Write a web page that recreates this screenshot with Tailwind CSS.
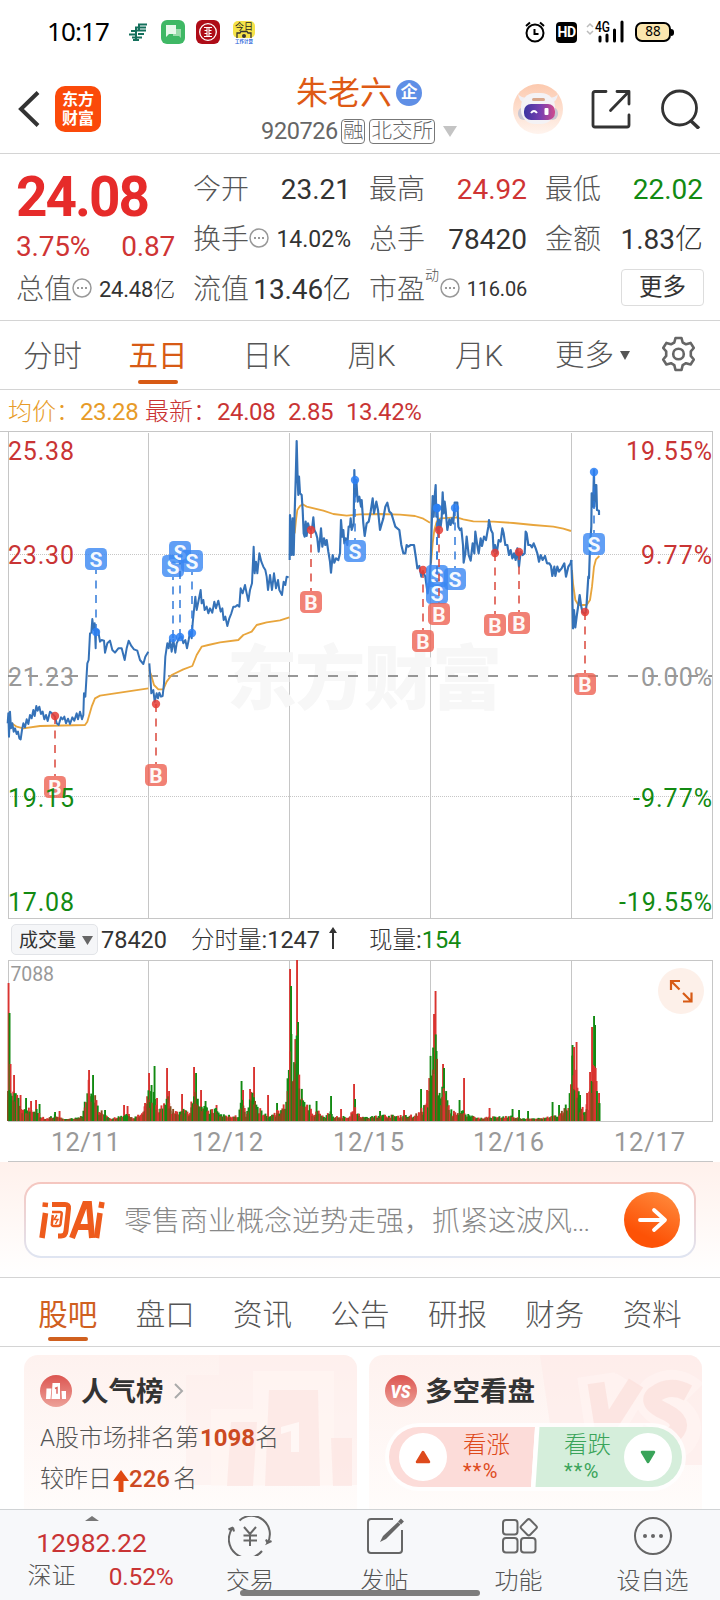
<!DOCTYPE html>
<html lang="zh-CN">
<head>
<meta charset="utf-8">
<title>朱老六 920726</title>
<script src="https://cdn.jsdelivr.net/npm/@tailwindcss/browser@4"></script>
</head>
<body class="bg-white">
<div class="w-[720px] h-[1600px] overflow-hidden flex flex-col bg-white text-[#333] whitespace-nowrap font-[Roboto,'Noto_Sans_CJK_SC',sans-serif]">

  <!-- status bar -->
  <div class="h-16 shrink-0 flex items-center justify-between pl-[47px] pr-[46px] text-black">
    <div class="flex items-center">
      <span class="text-[26px] leading-none w-[82px] -mt-[2px] font-['Noto_Sans',sans-serif] tracking-[-0.9px]">10:17</span>
      <svg class="w-[18px] h-[18px]" viewBox="0 0 18 18" fill="none" stroke="#14705c" stroke-width="2"><path d="M9 1.5h9M6 4.500h11M2 8h5M8 7.500h9M0 11.500h7M9 11h6M3 14.500h4M8 14.500h5M4 17h6M7 4v13M10 1v6"/></svg>
      <svg class="ml-[14px] w-6 h-6" viewBox="0 0 24 24"><rect width="24" height="24" rx="6" fill="#3fb865"/><path d="M12 9h8v9l-2-2h-6z" fill="#9adbab"/><path d="M5 5h10v9H8l-3 3z" fill="#e8f8eb"/></svg>
      <svg class="ml-[11px] w-6 h-6" viewBox="0 0 24 24"><rect width="24" height="24" rx="6" fill="#ae0c17"/><circle cx="12" cy="12" r="8.300" fill="none" stroke="#fff" stroke-width="1.300"/><path d="M8 7.500h8M8 16.500h8M11 8v8M13 8v8M8.500 10.500h2.500v3H8.500M15.500 10.500H13v3h2.500" fill="none" stroke="#fff" stroke-width="1.100"/></svg>
      <svg class="ml-[13px] w-[22px] h-6" viewBox="0 0 22 24"><rect y="1" width="22" height="17" rx="5" fill="#f5e249"/><text x="11" y="10" font-size="9" text-anchor="middle" fill="#222">今日</text><path d="M4 18v-5h3l1-1.500h6l1 1.500h3v5" fill="none" stroke="#333" stroke-width="1.300"/><circle cx="11" cy="16" r="2" fill="#333"/><text x="11" y="23" font-size="4.500" font-weight="700" text-anchor="middle" fill="#2b62d9">工作计算</text></svg>
    </div>
    <div class="flex items-center">
      <svg class="w-5 h-[22px]" viewBox="0 0 20 22" fill="none" stroke="#000" stroke-width="2"><circle cx="10" cy="12" r="8.500"/><path d="M9.500 8v5h4M1 5l4-3.500M19 5l-4-3.500"/></svg>
      <span class="ml-[11px] w-[21px] h-[21px] rounded-[4px] bg-black text-white text-[14px] font-bold leading-[21px] text-center tracking-[-0.5px]">HD</span>
      <svg class="ml-[9px] w-[40px] h-[24px]" viewBox="0 0 40 24"><path d="M1 7l3-3 3 3M1 11l3 3 3-3" fill="none" stroke="#bbb" stroke-width="1.500"/><text x="9" y="12" font-size="14" font-weight="500" textLength="15" lengthAdjust="spacingAndGlyphs">4G</text><path d="M14 17v4M21 15v6M28.500 10v11M36 2v19" stroke="#000" stroke-width="3" stroke-linecap="round"/></svg>
      <div class="ml-[9px] w-[36px] h-5 rounded-[7px] border-2 border-black bg-[#fbe6ae] text-[13.500px] leading-[15px] text-center font-['Noto_Sans',sans-serif]">88</div><div class="w-[3px] h-[7px] bg-black rounded-r"></div>
    </div>
  </div>

  <!-- title bar -->
  <header class="h-[90px] shrink-0 border-b border-[#d4d4d4] grid grid-cols-[1fr_auto_1fr] pt-[6px]">
    <div class="flex items-center pl-[18px] pb-[5px]">
      <svg class="w-[22px] h-[36px]" viewBox="0 0 22 36" fill="none" stroke="#333" stroke-width="4"><path d="M20 1.500L3 18l17 16.500"/></svg>
      <div class="ml-[15px] w-[46px] h-[46px] rounded-[10px] bg-[#fb4a0a] text-white text-[16px] font-bold leading-[19px] text-center pt-[4px]">东方<br>财富</div>
    </div>
    <div class="flex flex-col items-center pr-[2px]">
      <div class="flex items-center h-[46px] text-[#de5a14]"><span class="text-[32px] leading-none">朱老六</span>
        <span class="ml-1 w-[26px] h-[26px] rounded-full bg-[#5f8fe6] text-white text-[17px] font-bold text-center leading-[25px]">企</span></div>
      <div class="flex items-center h-[30px] text-[#666]">
        <span class="text-[23.500px] tracking-[-0.4px] leading-none mr-[3px] pt-px">920726</span>
        <span class="border-[1.500px] border-[#777] rounded-[4px] text-[20.500px] font-light leading-[23px] h-[25px] px-[1px] mr-1">融</span>
        <span class="border-[1.500px] border-[#777] rounded-[4px] text-[20.500px] font-light leading-[23px] h-[25px] px-[1px]">北交所</span>
        <svg class="ml-2 w-[14px] h-[11px]" viewBox="0 0 14 11"><path d="M0 0h14L7 11z" fill="#c4c4c4"/></svg>
      </div>
    </div>
    <div class="flex items-center justify-end pr-[19px] pb-[5px]">
      <svg class="w-[50px] h-[50px]" viewBox="0 0 50 50">
        <defs><linearGradient id="halo" x2="0" y2="1"><stop stop-color="#fcc9ae"/><stop offset="1" stop-color="#fff4ee"/></linearGradient>
        <linearGradient id="visor"><stop stop-color="#3b35a0"/><stop offset=".55" stop-color="#7a3fb0"/><stop offset="1" stop-color="#d04a8c"/></linearGradient></defs>
        <circle cx="25" cy="25" r="25" fill="url(#halo)"/>
        <path d="M5 10q1 7 6 9l4-5q-7 0-10-4zM45 10q-1 7-6 9l-4-5q7 0 10-4z" fill="#f1eff3"/>
        <rect x="5" y="23" width="40" height="13" rx="6" fill="#c9c6d2"/>
        <rect x="8" y="9" width="34" height="31" rx="14" fill="#f4f2f5"/>
        <rect x="19" y="14" width="13" height="3" rx="1.500" fill="#d9a68a"/>
        <rect x="11" y="20" width="31" height="16" rx="7" fill="url(#visor)"/>
        <path d="M18 29q3-4 6 0" fill="none" stroke="#fff" stroke-width="2"/><rect x="31.500" y="24" width="4" height="7" rx="1" fill="#fff"/>
      </svg>
      <svg class="ml-[28px] w-[40px] h-[40px]" viewBox="0 0 40 40" fill="none" stroke="#333" stroke-width="2.800" stroke-linecap="round" stroke-linejoin="round"><path d="M15 2.500H4q-2 0-2 2V36q0 2 2 2h32q2 0 2-2V26M26 2.500h12V15M37 3.500L19.500 21.500"/></svg>
      <svg class="ml-[30px] w-[40px] h-[40px]" viewBox="0 0 40 40" fill="none" stroke="#333" stroke-width="2.800"><circle cx="18.500" cy="19" r="17"/><path d="M29.500 31.500l8.500 8" stroke-width="3.500"/></svg>
    </div>
  </header>

  <!-- quote -->
  <section class="h-[167px] shrink-0 border-b border-[#d4d4d4] pl-4 pr-[17px] pt-[10px] flex gap-[18px] text-[28px] leading-[51px]">
    <div class="w-[159px]">
      <div class="h-[60px] text-[56px] leading-[66px] font-bold text-[#e62b2a] tracking-[-2px] origin-left scale-x-[.98]">24.08</div>
      <div class="h-10 flex justify-between text-[28px] leading-[46px] tracking-[-0.2px] text-[#cf3434]"><span>3.75%</span><span>0.87</span></div>
      <div class="h-[50px] flex items-center justify-between"><span class="flex items-center font-light text-[#555]">总值<svg class="w-5 h-5 -mt-[2px]" viewBox="0 0 20 20" fill="none" stroke="#999" stroke-width="1.500"><circle cx="10" cy="10" r="9"/><path d="M5 10h2M9 10h2M13 10h2" stroke-width="2"/></svg></span><span class="text-[22px] tracking-[-0.2px]">24.48<span class="font-light">亿</span></span></div>
    </div>
    <div class="w-[158px]">
      <div class="h-[50px] flex justify-between"><span class="font-light text-[#555]">今开</span><span>23.21</span></div>
      <div class="h-[50px] flex items-center justify-between"><span class="flex items-center font-light text-[#555]">换手<svg class="w-5 h-5 -mt-[2px]" viewBox="0 0 20 20" fill="none" stroke="#999" stroke-width="1.500"><circle cx="10" cy="10" r="9"/><path d="M5 10h2M9 10h2M13 10h2" stroke-width="2"/></svg></span><span class="text-[23px]">14.02%</span></div>
      <div class="h-[50px] flex justify-between"><span class="font-light text-[#555]">流值</span><span class="tracking-[-0.1px]">13.46<span class="font-light">亿</span></span></div>
    </div>
    <div class="w-[158px]">
      <div class="h-[50px] flex justify-between"><span class="font-light text-[#555]">最高</span><span class="text-[#cf3434]">24.92</span></div>
      <div class="h-[50px] flex justify-between"><span class="font-light text-[#555]">总手</span><span>78420</span></div>
      <div class="h-[50px] flex items-center justify-between"><span class="flex items-center font-light text-[#555]">市盈<span class="text-[14px] leading-none -mt-7 w-[14px]">动</span><svg class="w-5 h-5 ml-px -mt-[2px]" viewBox="0 0 20 20" fill="none" stroke="#999" stroke-width="1.500"><circle cx="10" cy="10" r="9"/><path d="M5 10h2M9 10h2M13 10h2" stroke-width="2"/></svg></span><span class="text-[20px] tracking-[-0.2px]">116.06</span></div>
    </div>
    <div class="w-[158px]">
      <div class="h-[50px] flex justify-between"><span class="font-light text-[#555]">最低</span><span class="text-[#128a12]">22.02</span></div>
      <div class="h-[50px] flex justify-between"><span class="font-light text-[#555]">金额</span><span>1.83<span class="font-light">亿</span></span></div>
      <div class="h-[50px] flex items-center justify-end -mt-[2px]"><span class="w-[83px] h-[37px] -mr-px rounded-[4px] border-[1.500px] border-[#ddd] text-[23.500px] leading-[34px] text-center">更多</span></div>
    </div>
  </section>

  <!-- period tabs -->
  <nav class="h-[69px] shrink-0 border-b border-[#d4d4d4] flex text-[29.500px] font-light leading-[71px] text-[#555] text-center pl-2">
    <span class="w-[89px]">分时</span>
    <span class="w-[122px] flex flex-col items-center text-[#d75a15] font-normal"><span class="h-[59px]">五日</span><span class="w-10 h-1 rounded bg-[#d75a15]"></span></span>
    <span class="w-[95px]">日K</span>
    <span class="w-[115px]">周K</span>
    <span class="w-[100px]">月K</span>
    <span class="w-[101px] flex items-center justify-end"><span>更多</span><svg class="w-[10px] h-[9px] ml-[6px]" viewBox="0 0 10 9"><path d="M0 0h10L5 9z" fill="#555"/></svg></span>
    <span class="w-[80px] pl-[17px] flex items-center justify-center">
      <svg class="w-[35px] h-[36px] -mt-[2px]" viewBox="0 0 35 36" fill="none" stroke="#666" stroke-width="2.600" stroke-linejoin="round"><path d="M14.500 2h6l1.200 4.500 3.300 1.800 4.600-1.400 3.200 5.100-3 3.400v4.500l3 3.600-3.200 5-4.600-1.300-3.300 1.900L20.500 34h-6l-1.200-4.900-3.300-1.900-4.600 1.300-3.200-5 3-3.600v-4.500l-3-3.400 3.200-5.100L10 8.300l3.300-1.800z"/><circle cx="17.500" cy="18" r="5.300"/></svg>
    </span>
  </nav>

  <div class="h-[40px] shrink-0 flex text-[24px] leading-[44px] pl-2 text-[#c93434] tracking-[-0.4px]">
    <span class="w-[72px] text-[#e79b28] tracking-normal font-light">均价：</span><span class="w-[65px] text-[#e79b28]">23.28</span><span class="w-[72px] tracking-normal font-light">最新：</span><span class="w-[71px]">24.08</span><span class="w-[58px]">2.85</span><span>13.42%</span>
  </div>

  <!-- price chart -->
  <svg class="w-[720px] h-[489px] shrink-0" viewBox="0 430 720 489" id="price">
    <g stroke="#c6c6c6" stroke-width="1" fill="none">
      <path d="M0 431.500H713M8 918.500H713M8.500 431V918M148.500 433V918M289.500 433V918M430.500 433V918M571.500 433V918M712.500 431V918"/>
      <path d="M8 554.500H712M8 796.500H712" stroke-dasharray="1 1"/>
    </g>
    <text x="227" y="704" font-size="70" font-weight="900" textLength="275" fill="#f7f7f7">东方财富</text>
    <path d="M8 676H712" stroke="#777" stroke-width="1.700" stroke-dasharray="10 10"/>
    <g fill="none" stroke-linejoin="round">
      <g transform="translate(0 430) scale(.33333)">
        <g stroke="#e8a53c" stroke-width="5.500">
          <path d="M35 880L50 890 70 895 120 888 255 885 262 875 275 830 285 805 300 797 345 790 445 775"/>
          <path d="M448 720L455 740 462 765 475 778 490 778 500 755 515 735 550 718 577 708 590 675 605 650 625 645 660 637 715 630 730 615 755 605 770 585 800 577 840 571 868 562"/>
        </g>
        <g stroke="#3572b8" stroke-width="6">
          <path d="M23 880L25 850 27 920 30 845 33 895 37 880 41 905 45 895 50 912 54 905 58 925 62 928 66 900 70 880 75 892 80 868 85 882 90 855 95 865 100 840 104 858 109 828 113 842 118 830 123 852 128 845 133 868 138 855 143 873 150 845 156 850 165 860 170 880 176 885 183 862 188 868 193 860 198 880 204 866 210 882 217 862 223 872 230 850 234 868 240 845 246 868 250 855 252 790 256 800 262 700 266 690 270 610 274 608 277 567 281 600 284 580 287 655 288 600 294 600 300 635 305 630 312 632 315 668 322 640 330 632 337 660 345 668 355 655 365 655 374 690 380 655 386 632 394 648 402 658 412 662 420 690 430 702 436 680 445 665"/>
          <path d="M448 700L451 740 454 790 460 780 464 815 470 790 474 805 478 788 483 800 488 798 492 760 496 680 502 640 506 655 510 630 515 665 520 630 526 668 530 640 537 625 545 620 550 640 556 630 561 655 566 630 570 605 575 625 578 580 582 540 586 500 590 540 596 510 602 480 605 520 610 510 614 540 620 530 625 550 630 535 637 548 643 515 648 535 655 512 662 545 667 535 671 570 676 560 682 588 688 565 694 550 700 530 706 530 712 525 718 530 722 475 728 490 735 465 740 490 745 513 750 480 756 460 761 350 764 430 768 395 772 430 778 370 784 395 790 410 796 420 800 440 804 480 810 435 816 480 822 430 828 475 834 450 838 480 846 495 851 455 856 465 860 440 866 442"/>
        </g>
      </g>
      <g transform="translate(280 430) scale(.33333)">
        <g stroke="#e8a53c" stroke-width="5.500">
          <path d="M44 310L48 270 52 240 60 228 68 223 80 230 130 242 160 252 200 257 240 253 300 252 360 254 405 258 430 266 450 278"/>
          <path d="M453 400L458 340 463 300 470 275 480 265 530 262 550 268 580 274 640 275 700 279 760 285 820 290 850 296 873 303"/>
          <path d="M876 420L879 460 886 510 895 525 920 525 930 510 936 470 942 410 948 388 958 378"/>
        </g>
        <g stroke="#3572b8" stroke-width="6.500">
          <path d="M29 390L30 255 33 300 35 375 38 265 41 375 44 250 47 150 50 33 53 150 55 195 57 140 60 190 65 195 68 240 71 310 74 320 77 275 80 318 84 280 88 295 93 300 97 290 100 262 103 300 108 310 112 325 116 365 120 330 123 295 127 350 132 325 136 345 140 330 145 365 150 395 153 428 158 375 163 398 168 385 175 390 180 370 183 270 187 320 190 300 193 340 197 325 202 345 206 290 210 290 212 265 215 300 218 290 221 280 223 120 225 200 229 150 233 215 238 200 243 230 245 210 250 280 254 318 260 280 266 275 272 245 278 205 282 250 289 215 294 240 300 300 305 282 310 265 316 230 322 218 328 245 334 250 340 270 346 290 352 295 358 300 364 345 370 370 376 370 380 345 385 350 392 345 402 345 408 385 412 415 418 408 424 440 429 425 436 440 440 470 443 490 448 460 452 400 455 290 458 198 461 260 464 200 467 165 469 260 472 225 475 320 478 270 482 290 485 265 488 187 491 250 494 215 497 240 502 300 508 268 512 285 516 265 520 280 524 218 532 218 535 290 540 300 544 295 549 345 551 398 556 370 560 320 566 375 572 392 578 340 583 370 586 305 591 340 596 370 602 325 606 348 612 320 618 330 625 290 627 270 633 300 638 310 641 365 645 345 650 370 656 330 662 335 667 295 671 310 676 345 682 345 687 375 692 360 697 385 702 370 707 390 712 355 717 410 722 365 728 375 734 370 737 305 740 310 745 345 751 345 756 352 761 340 767 355 772 370 777 395 782 375 788 390 795 378 801 400 808 400 813 408 817 438 823 410 826 438 832 410 837 425 845 415 853 400 858 440 865 410 872 400 874 390"/>
          <path d="M874 390L876 450 879 595 882 540 886 592 890 560 895 525 899 495 903 525 907 545 912 550 917 548 920 520 925 440 927 445 930 350 934 290 935 190 939 230 942 120 943 230 946 165 949 165 951 240 957 242 957 255"/>
        </g>
      </g>
    </g>
    <g id="marks"></g>
    <g font-size="25" fill="#c93434">
      <text x="8" y="460" textLength="66">25.38</text><text x="8" y="564" textLength="66">23.30</text>
      <text x="8" y="686" textLength="66" fill="#999">21.23</text>
      <text x="8" y="807" textLength="66" fill="#128a12">19.15</text><text x="8" y="911" textLength="66" fill="#128a12">17.08</text>
      <text x="626" y="460" textLength="86">19.55%</text><text x="641" y="564" textLength="71">9.77%</text>
      <text x="641" y="686" textLength="71" fill="#999">0.00%</text>
      <text x="633" y="807" textLength="79" fill="#128a12">-9.77%</text><text x="619" y="911" textLength="93" fill="#128a12">-19.55%</text>
    </g>
  </svg>

  <!-- volume -->
  <div class="h-[41px] shrink-0 flex items-center pl-[11px] text-[23.500px] leading-[41px]">
    <span class="w-[87px] h-[31px] rounded-[5px] border border-[#e2e4e8] bg-[#f5f6f8] flex items-center pl-[7px] pt-px text-[19px]">成交量<svg class="ml-[6px] w-[11px] h-[9px]" viewBox="0 0 11 9"><path d="M0 0h11L5.500 9z" fill="#666"/></svg></span>
    <span class="w-[90px] pl-[3px] pt-[2px]">78420</span>
    <span class="w-[135px] pl-[3px] pt-[2px]"><span class="font-light">分时量</span>:1247</span>
    <svg class="w-[8px] h-[22px] ml-[6px] -mt-1" viewBox="0 0 8 22"><path d="M4 4v18" stroke="#333" stroke-width="2"/><path d="M0 6l4-6 4 6z" fill="#333"/></svg>
    <span class="ml-[32px] pt-[2px]"><span class="font-light">现量</span>:<span class="text-[#128a12]">154</span></span>
  </div>
  <svg class="w-[720px] h-[202px] shrink-0" viewBox="0 960 720 202">
    <path d="M8 960.500H713M8 1121.500H713M8.500 960V1121M148.500 960V1121M289.500 960V1121M430.500 960V1121M571.500 960V1121M712.500 960V1121M8 1161.500H713" stroke="#c6c6c6" fill="none"/>
    <text x="10.500" y="981" font-size="19.500" textLength="43.500" fill="#999">7088</text>
    <g id="vol"></g>
    <circle cx="681" cy="991" r="23" fill="#fdf0e9"/>
    <path d="M680 981h-9v9M671.500 981.500l8 8M683 1001.500h8.500v-9M691 1001l-8-8" fill="none" stroke="#d75a15" stroke-width="2.200"/>
    <g font-size="25.500" fill="#999">
      <text x="51" y="1151" textLength="69">12/11</text><text x="192" y="1151" textLength="71">12/12</text><text x="333" y="1151" textLength="71">12/15</text><text x="473" y="1151" textLength="71">12/16</text><text x="614" y="1151" textLength="71">12/17</text>
    </g>
  </svg>

  <!-- AI prompt -->
  <section class="h-[116px] shrink-0 border-b border-[#d4d4d4] bg-gradient-to-b from-[#fff1ec] to-white px-6 pt-5">
    <div class="h-[76px] rounded-[17px] p-[2px] bg-gradient-to-b from-[#f5c6bf] to-[#dfe5f2]">
      <div class="h-full rounded-[15px] bg-white flex items-center pl-[13px] pr-[14px]">
        <svg class="w-[66px] h-[40px]" viewBox="0 0 66 40" fill="none" stroke="#ee5b1c"><path d="M6.500 13L3 38M6.500 2.500L6 7" stroke-width="5.500"/><path d="M13 4.500h13q4 0 3.500 4L27 31q-.5 5-5 5h-3" stroke-width="5"/><path d="M13 12h8q2 0 1.700 2l-1.200 10q-.3 2-2.300 2h-4.500q-2.200 0-1.900-2l1-9" stroke-width="2.500"/><path d="M18 15l-3 4.500h4l-2.500 4.500" stroke-width="1.500"/><path d="M33 38L46 4h4l3 34M38 27h13" stroke-width="6"/><path d="M61 13l-3.500 25M63 2l-1 6" stroke-width="5.500"/></svg>
        <span class="ml-[19px] flex-1 text-[28px] font-light leading-none text-[#888] pt-[3px]">零售商业概念逆势走强，抓紧这波风<span class="tracking-[-1px]">...</span></span>
        <svg class="w-14 h-14" viewBox="0 0 56 56"><defs><linearGradient id="go" x1=".8" x2=".4" y2=".8"><stop stop-color="#ff8a3c"/><stop offset="1" stop-color="#fd5206"/></linearGradient></defs><circle cx="28" cy="28" r="28" fill="url(#go)"/><path d="M16 28h24M30 18l11 10-11 10" fill="none" stroke="#fff" stroke-width="3.800" stroke-linecap="round" stroke-linejoin="round"/></svg>
      </div>
    </div>
  </section>

  <nav class="h-[69px] shrink-0 border-b border-[#d4d4d4] grid grid-cols-7 px-[19px] text-[29.500px] font-light leading-[74px] text-[#555] text-center">
    <span class="flex flex-col items-center text-[#d0601f] font-normal"><span class="h-[59px]">股吧</span><span class="w-10 h-1 rounded bg-[#d0601f]"></span></span>
    <span>盘口</span><span>资讯</span><span>公告</span><span>研报</span><span>财务</span><span>资料</span>
  </nav>

  <!-- cards -->
  <section class="h-[162px] shrink-0 overflow-hidden px-6 pt-2 grid grid-cols-[333px_333px] gap-3 text-[#555]">
    <div class="relative h-[170px] rounded-[14px] overflow-hidden bg-gradient-to-b from-[#fef2ef] to-[#fffdfc] pl-4 pt-5">
      <svg class="absolute right-0 top-0 w-[180px] h-[150px]" viewBox="0 0 180 150"><path d="M42 0h138v130H9V20h33z" fill="#fdeeeb" opacity=".5"/><path d="M76 16h81v115H34V54h42z" fill="#fff6f4" opacity=".6"/><path d="M54 67h26l-4 64H50zM92 35h49l2 96H88zM154 83h21v48h-19z" fill="#fce3df" opacity=".6"/><path d="M104 72l18-5v30h-8V76l-10 3z" fill="#fff7f5"/></svg>
      <div class="relative flex items-center h-8">
        <svg class="w-8 h-8" viewBox="0 0 32 32"><defs><linearGradient id="rd" x2="0" y2="1"><stop stop-color="#dc5550"/><stop offset="1" stop-color="#eda199"/></linearGradient></defs><circle cx="16" cy="16" r="16" fill="url(#rd)"/><path d="M6.500 13.500h5L10.500 24H6zM12.500 8h7.500v16h-8.500zM21.500 16H26v8h-4z" fill="#fff"/><path d="M15 13.500l2-.8v6" stroke="#dc6660" stroke-width="1.500" fill="none"/></svg>
        <span class="ml-[9px] text-[27.500px] font-bold leading-none text-[#333] pt-px">人气榜</span>
        <svg class="ml-[10px] w-[10px] h-4" viewBox="0 0 10 16" fill="none" stroke="#aaa" stroke-width="2"><path d="M1 1l7 7-7 7"/></svg>
      </div>
      <div class="relative mt-[11px] h-10 flex items-center text-[24px] font-light">A股市场排名第<b class="font-bold text-[#cc4a22] pl-px">1098</b>名</div>
      <div class="relative mt-px h-10 flex items-center text-[24px] font-light">较昨日<svg class="w-4 h-[22px] mx-px mt-1" viewBox="0 0 16 22"><path d="M8 0l8 11h-5.500v11h-5V11H0z" fill="#e04a12"/></svg><b class="font-medium text-[#cc4a22] -ml-px">226</b><span class="pl-[3px]">名</span></div>
    </div>
    <div class="relative h-[170px] rounded-[14px] overflow-hidden bg-gradient-to-b from-[#fef2ef] to-[#fffdfc] pl-4 pt-5">
      <svg class="absolute right-0 top-0 w-[180px] h-[150px]" viewBox="0 0 180 150"><path d="M18 0h162v110H34z" fill="#fdeae7" opacity=".55"/><g fill="none" stroke-linejoin="bevel"><path d="M74 20l8 54 28-46M168 42q-14-14-32-4-10 8 8 17 24 12 12 28-16 14-40 2" stroke="#fff5f3" stroke-width="38" opacity=".6"/><path d="M74 28l8 50 32-50M166 38q-18-10-34 2-8 8 12 17 20 10 8 22-14 8-34-2" stroke="#fbe0dc" stroke-width="17" opacity=".75"/></g></svg>
      <div class="relative flex items-center h-8">
        <svg class="w-8 h-8" viewBox="0 0 32 32"><circle cx="16" cy="16" r="16" fill="url(#rd)"/><text x="15.500" y="22.500" font-size="18" font-weight="900" font-style="italic" text-anchor="middle" textLength="20" lengthAdjust="spacingAndGlyphs" fill="#fff">VS</text></svg>
        <span class="ml-2 text-[27.500px] font-bold leading-none text-[#333] pt-[2px]">多空看盘</span>
      </div>
      <div class="relative mt-[16px] w-[301px] h-[68px] rounded-full bg-white/80 p-1">
        <div class="relative h-[60px] rounded-full overflow-hidden flex">
          <svg class="absolute inset-0 w-full h-full" viewBox="0 0 293 60"><path d="M0 0h146l-4 60H0z" fill="#fcdcd9"/><path d="M146 0h5l-4 60h-5z" fill="#fff"/><path d="M150.500 0H293v60H146.500z" fill="#d5eedb"/></svg>
          <div class="relative w-1/2 flex items-center pl-[10px] text-[#de4a1c]">
            <span class="w-12 h-12 rounded-full bg-white flex items-center justify-center"><svg class="w-[16px] h-[14px]" viewBox="0 0 16 14"><path d="M8 2l6 10H2z" fill="#de4a1c" stroke="#de4a1c" stroke-width="2.500" stroke-linejoin="round"/></svg></span>
            <span class="pl-4"><span class="block text-[23.500px] font-light leading-[28px]">看涨</span><span class="block text-[20px] leading-[24px] tracking-[1.200px]">**%</span></span>
          </div>
          <div class="relative w-1/2 flex items-center justify-end pr-[10px] text-[#3aa45a]">
            <span class="pr-[13px]"><span class="block text-[23.500px] font-light leading-[28px]">看跌</span><span class="block text-[20px] leading-[24px] tracking-[1.200px]">**%</span></span>
            <span class="w-12 h-12 rounded-full bg-white flex items-center justify-center"><svg class="w-[16px] h-[14px]" viewBox="0 0 16 14"><path d="M8 12l6-10H2z" fill="#3aa45a" stroke="#3aa45a" stroke-width="2.500" stroke-linejoin="round"/></svg></span>
          </div>
        </div>
      </div>
    </div>
  </section>

  <!-- bottom bar -->
  <footer class="relative h-[91px] shrink-0 border-t border-[#d0d3d5] bg-[#f7f8fa] flex text-[24px] font-light leading-[30px] text-[#555]">
    <div class="w-[183px] flex flex-col items-center text-[#c93434] font-normal">
      <svg class="w-[14px] h-[5px] mt-[6px]" viewBox="0 0 14 5"><path d="M0 5l7-5 7 5z" fill="#777"/></svg>
      <span class="text-[26.500px] leading-[43px] -mb-px tracking-[-0.1px]">12982.22</span>
      <span class="w-[146px] ml-[18px] flex justify-between leading-[27px]"><span class="font-light text-[#555]">深证</span><span class="text-[24.500px] tracking-[-0.2px]">0.52%</span></span>
    </div>
    <div class="w-[134px] flex flex-col items-center pt-[7px]">
      <svg class="w-[44px] h-[40px] -mt-px" viewBox="0 -1 44 40" fill="none" stroke="#666" stroke-width="2"><path d="M11.500 3.500A18.200 18.200 0 0 1 39.500 26l4-2M39.500 26l-1.500-3.500M34 34A18.200 18.200 0 0 1 5 10.500L.5 12.500M5 10.500l1 4M16 10l6 7 6-7M15.500 18.500h13.500M15.500 23.500h13.500M22 17v12"/></svg>
      <span class="mt-[10px]">交易</span></div>
    <div class="w-[135px] flex flex-col items-center pt-[7px]">
      <svg class="w-[38px] h-[38px]" viewBox="0 0 38 38" fill="none" stroke="#666" stroke-width="2"><path d="M27 2H5Q2 2 2 5v28q0 3 3 3h28q3 0 3-3V13"/><path d="M14 25l3-6L32 5l2.500 2.500L20 22z" fill="#666" stroke="none"/><path d="M33.500 3l3 3" stroke-width="4"/></svg>
      <span class="mt-[11px]">发帖</span></div>
    <div class="w-[133px] flex flex-col items-center pt-[7px]">
      <svg class="w-[38px] h-[38px]" viewBox="0 0 38 38" fill="none" stroke="#666" stroke-width="2"><rect x="3" y="3" width="14.500" height="14.500" rx="3"/><rect x="3" y="21" width="14.500" height="14.500" rx="3"/><rect x="21" y="21" width="14.500" height="14.500" rx="3"/><rect x="22.500" y="4" width="12.500" height="12.500" rx="2" transform="rotate(45 28.750 10.250)"/></svg>
      <span class="mt-[11px]">功能</span></div>
    <div class="w-[135px] flex flex-col items-center pt-[7px]">
      <svg class="w-[38px] h-[38px]" viewBox="0 0 38 38" fill="none" stroke="#666" stroke-width="2"><circle cx="19" cy="19" r="18"/><g fill="#666" stroke="none"><circle cx="11" cy="19" r="2"/><circle cx="19" cy="19" r="2"/><circle cx="27" cy="19" r="2"/></g></svg>
      <span class="mt-[11px]">设自选</span></div>
    <div class="absolute left-[240px] bottom-[4px] w-[240px] h-[6px] rounded-full bg-[#7c7c7c]"></div>
  </footer>
</div>

<script>
// Trade marks: type, x, dot y, label centre y
const marks = [['B',55,716,787],['S',96,632,559],['B',156,704,775],['S',173,638,566],['S',180,637,552],['S',192,633,561],
['B',311,530,602],['S',355,480,551],['B',423,570,641],['S',437,508,576],['S',437,508,593],['S',455,508,579],['B',439,530,614],
['B',495,553,625],['B',519,552,623],['S',594,472,544],['B',585,612,684]];
let m = '';
for (const [t, x, d, y] of marks) {
  const s = t === 'S', up = y < d;
  m += `<path d="M${x} ${d}V${up ? y + 11 : y - 11}" stroke="${s ? '#2f78d8' : '#d9453a'}" stroke-opacity=".75" stroke-width="2" stroke-dasharray="8 6.500"/>
  <circle cx="${x}" cy="${d}" r="4.200" fill="${s ? '#2b80f5' : '#e53c35'}" fill-opacity=".85"/>
  <rect x="${x - 11}" y="${y - 11}" width="22" height="22" rx="4.500" fill="${s ? '#3a87f2' : '#ee6153'}" fill-opacity=".8"/>
  <text x="${x}" y="${y + 7.5}" text-anchor="middle" font-size="21" font-weight="700" fill="#fff" fill-opacity=".95">${t}</text>`;
}
document.getElementById('marks').innerHTML = m;

// Volume: envelope points, then single tall bars
const env = [[8,60],[12,32],[16,33],[20,18],[27,14],[36,14],[41,5],[48,3],[55,8],[60,4],[66,2],[78,4],[82,7],[86,26],[89,50],[92,44],[96,22],[101,14],[106,8],[112,3],[122,6],[128,8],[132,4],[143,9],[149,34],[153,32],[158,13],[163,18],[168,26],[171,13],[190,12],[194,48],[198,26],[203,20],[208,12],[216,14],[222,7],[238,6],[242,26],[246,6],[252,34],[256,20],[262,10],[270,6],[277,12],[283,14],[287,34],[290,130],[293,62],[297,105],[300,38],[304,25],[308,22],[312,10],[318,12],[324,4],[331,12],[335,5],[350,6],[354,20],[358,8],[366,4],[380,7],[400,6],[415,7],[421,14],[428,20],[431,80],[436,90],[438,40],[441,26],[444,52],[448,20],[452,10],[462,12],[468,8],[478,4],[510,6],[520,3],[535,3],[545,4],[560,7],[568,22],[572,74],[576,52],[580,24],[584,10],[588,22],[591,50],[594,100],[596,42],[600,26]];
const spikes = [[8.5,138,0],[9.5,108,1],[10.500,57,0],[14,46,0],[20.5,26,0],[26,23,1],[31,20,0],[36,21,0],[39.500,17,1],[55,9,1],[59.500,10,0],[89,51,0],[93,46,1],[105,11,1],[124,16,0],[127.500,15,0],[145,18,0],[149,48,0],[151.500,36,1],[154.500,55,1],[157,23,0],[167,53,0],[169,30,0],[182,27,0],[194,54,0],[196,48,1],[201,31,0],[205.500,20,1],[216.500,16,0],[241.500,40,1],[243,31,0],[250,32,0],[254,54,0],[268,26,0],[277,18,1],[290,152,0],[291,135,1],[297,161,0],[298,99,1],[316.500,20,1],[331,25,1],[341,12,0],[354,37,0],[355,22,1],[380,10,1],[404,11,0],[421,32,1],[427,31,0],[434,107,0],[435.500,130,0],[436.500,70,1],[443,57,0],[444,53,1],[459.500,21,1],[464,43,0],[489.500,13,0],[512.500,12,1],[519,11,1],[528,10,1],[552.500,19,1],[559,16,1],[572.500,76,1],[574,74,0],[576.500,79,0],[580,26,1],[587,28,0],[590,49,0],[592,94,0],[594,105,1],[595,96,1],[596.500,40,0],[599,28,0]];
const cols = ['#d93430', '#128a12', '#8a4a1c'];
let seed = 7, k = 0, v = '';
const rnd = () => (seed = seed * 16807 % 2147483647) / 2147483647;
const bar = (x, h, c) => v += `<rect x="${x - .9}" y="${1121 - h}" width="1.900" height="${h}" fill="${cols[c]}"/>`;
for (const [x, h, c] of spikes) bar(x, h, c);
for (let x = 8; x < 600; x += 1.3) {
  while (k < env.length - 2 && x > env[k + 1][0]) k++;
  const [a, p] = env[k], [b, q] = env[k + 1];
  const h = (p + (q - p) * (x - a) / (b - a)) * (.5 + .5 * rnd());
  const c = rnd();
  bar(x, Math.max(2, h), c < .42 ? 0 : c < .85 ? 1 : 2);
  if (rnd() < .4) bar(x, Math.max(1, h * .7), 2);
}
document.getElementById('vol').innerHTML = v;
</script>
</body>
</html>
